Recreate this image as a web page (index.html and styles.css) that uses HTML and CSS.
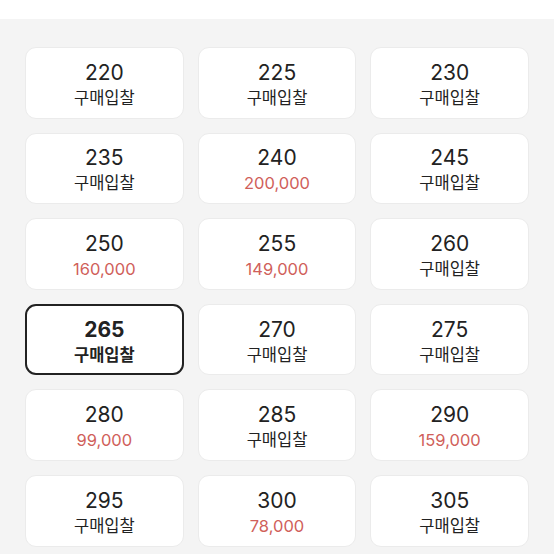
FILE: index.html
```html
<!DOCTYPE html>
<html lang="ko">
<head>
  <meta charset="UTF-8">
  <title>사이즈 선택</title>
  <link rel="stylesheet" href="styles.css">
</head>
<body>

  <div class="top-bar"></div>

  <section class="size-grid">
    <button class="size-card"><span class="size">220</span><span class="bid">구매입찰</span></button>
    <button class="size-card"><span class="size">225</span><span class="bid">구매입찰</span></button>
    <button class="size-card"><span class="size">230</span><span class="bid">구매입찰</span></button>

    <button class="size-card"><span class="size">235</span><span class="bid">구매입찰</span></button>
    <button class="size-card"><span class="size">240</span><span class="price">200,000</span></button>
    <button class="size-card"><span class="size">245</span><span class="bid">구매입찰</span></button>

    <button class="size-card"><span class="size">250</span><span class="price">160,000</span></button>
    <button class="size-card"><span class="size">255</span><span class="price">149,000</span></button>
    <button class="size-card"><span class="size">260</span><span class="bid">구매입찰</span></button>

    <button class="size-card is-selected"><span class="size">265</span><span class="bid">구매입찰</span></button>
    <button class="size-card"><span class="size">270</span><span class="bid">구매입찰</span></button>
    <button class="size-card"><span class="size">275</span><span class="bid">구매입찰</span></button>

    <button class="size-card"><span class="size">280</span><span class="price">99,000</span></button>
    <button class="size-card"><span class="size">285</span><span class="bid">구매입찰</span></button>
    <button class="size-card"><span class="size">290</span><span class="price">159,000</span></button>

    <button class="size-card"><span class="size">295</span><span class="bid">구매입찰</span></button>
    <button class="size-card"><span class="size">300</span><span class="price">78,000</span></button>
    <button class="size-card"><span class="size">305</span><span class="bid">구매입찰</span></button>
  </section>

</body>
</html>
```

FILE: styles.css
```css
body {
  background: #f4f4f4;
  color: #222;
  font-family: Inter, "Noto Sans CJK KR", sans-serif;
  margin: 0;
}

.top-bar {
  background: #fff;
  height: 19px;
}

.size-grid {
  display: grid;
  gap: 14px;
  grid-template-columns: repeat(3, 1fr);
  padding: 28px 25px;
}

.size-card {
  align-items: center;
  background: #fff;
  border: 1px solid #ebebeb;
  border-radius: 11px;
  color: inherit;
  display: flex;
  flex-direction: column;
  font: inherit;
  gap: 2px;
  height: 71.6px;
  justify-content: center;
  padding: 4px 0 0;
}

.size-card .size {
  font-size: 21px;
  line-height: 24px;
}

.size-card .bid,
.size-card .price {
  font-size: 16.5px;
  line-height: 22px;
}

.size-card .price {
  color: #d0605a;
}

.size-card.is-selected {
  border: 2px solid #222;
}

.size-card.is-selected .size,
.size-card.is-selected .bid {
  font-weight: 700;
}
```
